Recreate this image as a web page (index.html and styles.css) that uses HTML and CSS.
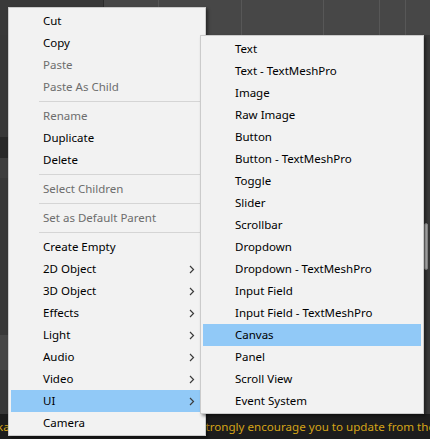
FILE: index.html
```html
<!DOCTYPE html>
<html>
<head>
<meta charset="utf-8">
<link rel="stylesheet" href="styles.css">
</head>
<body>
<div class="screen">
  <div class="topbar">
    <div class="hier-top"></div>
    <div class="scene">
      <div class="cell"></div><div class="cell"></div><div class="cell"></div><div class="cell"></div><div class="cell"></div><div class="cell last"></div>
    </div>
  </div>
  <div class="middle">
    <div class="left-panel">
      <div class="sp1"></div>
      <div class="band-dark"></div>
      <div class="band-tool"></div>
      <div class="sp2"></div>
      <div class="band-sel"></div>
    </div>
    <div class="center"></div>
    <div class="scrolltrack"><div class="thumb"></div></div>
  </div>
  <div class="status">
    <span class="status-left">ka</span><span class="status-right">strongly encourage you to update from the latest version</span>
  </div>

  <div class="menu menu-main">
    <div class="item">Cut</div>
    <div class="item">Copy</div>
    <div class="item disabled">Paste</div>
    <div class="item disabled">Paste As Child</div>
    <div class="sep"></div>
    <div class="item disabled">Rename</div>
    <div class="item">Duplicate</div>
    <div class="item">Delete</div>
    <div class="sep"></div>
    <div class="item disabled">Select Children</div>
    <div class="sep"></div>
    <div class="item disabled">Set as Default Parent</div>
    <div class="sep"></div>
    <div class="item">Create Empty</div>
    <div class="item sub"><span class="label">2D Object</span><svg class="chev" width="6" height="9" viewBox="0 0 6 9"><path d="M1 1 L4.5 4.5 L1 8" fill="none" stroke="#3c3c3c" stroke-width="1.2"/></svg></div>
    <div class="item sub"><span class="label">3D Object</span><svg class="chev" width="6" height="9" viewBox="0 0 6 9"><path d="M1 1 L4.5 4.5 L1 8" fill="none" stroke="#3c3c3c" stroke-width="1.2"/></svg></div>
    <div class="item sub"><span class="label">Effects</span><svg class="chev" width="6" height="9" viewBox="0 0 6 9"><path d="M1 1 L4.5 4.5 L1 8" fill="none" stroke="#3c3c3c" stroke-width="1.2"/></svg></div>
    <div class="item sub"><span class="label">Light</span><svg class="chev" width="6" height="9" viewBox="0 0 6 9"><path d="M1 1 L4.5 4.5 L1 8" fill="none" stroke="#3c3c3c" stroke-width="1.2"/></svg></div>
    <div class="item sub"><span class="label">Audio</span><svg class="chev" width="6" height="9" viewBox="0 0 6 9"><path d="M1 1 L4.5 4.5 L1 8" fill="none" stroke="#3c3c3c" stroke-width="1.2"/></svg></div>
    <div class="item sub"><span class="label">Video</span><svg class="chev" width="6" height="9" viewBox="0 0 6 9"><path d="M1 1 L4.5 4.5 L1 8" fill="none" stroke="#3c3c3c" stroke-width="1.2"/></svg></div>
    <div class="item sub active"><span class="label">UI</span><svg class="chev" width="6" height="9" viewBox="0 0 6 9"><path d="M1 1 L4.5 4.5 L1 8" fill="none" stroke="#3c3c3c" stroke-width="1.2"/></svg></div>
    <div class="item">Camera</div>
  </div>

  <div class="menu menu-sub">
    <div class="item">Text</div>
    <div class="item">Text - TextMeshPro</div>
    <div class="item">Image</div>
    <div class="item">Raw Image</div>
    <div class="item">Button</div>
    <div class="item">Button - TextMeshPro</div>
    <div class="item">Toggle</div>
    <div class="item">Slider</div>
    <div class="item">Scrollbar</div>
    <div class="item">Dropdown</div>
    <div class="item">Dropdown - TextMeshPro</div>
    <div class="item">Input Field</div>
    <div class="item">Input Field - TextMeshPro</div>
    <div class="item active">Canvas</div>
    <div class="item">Panel</div>
    <div class="item">Scroll View</div>
    <div class="item">Event System</div>
  </div>
</div>
</body>
</html>
```

FILE: styles.css
```css
* { box-sizing: border-box; }
html, body { margin: 0; padding: 0; background: #383838; }
.screen {
  position: relative;
  width: 430px;
  height: 439px;
  overflow: hidden;
  display: grid;
  grid-template-rows: 35px 1fr 25px;
  font-family: "Noto Sans", "Open Sans", sans-serif;
}
.topbar { display: flex; }
.hier-top { width: 104px; background: #393939; border-right: 1px solid #2c2c2c; }
.scene {
  flex: 1;
  background: #474747;
  display: grid;
  grid-template-columns: 55px 83px 82px 56px 26px 1fr;
}
.cell { border-right: 1px solid #575757; }
.cell.last { border-right: none; }

.middle { display: flex; background: #383838; }
.left-panel { width: 104px; display: flex; flex-direction: column; }
.sp1 { height: 102px; }
.band-dark { height: 21px; background: #282828; }
.band-tool { height: 20px; background: #3d3d3d; }
.sp2 { height: 157px; }
.band-sel { height: 35px; background: #464646; }
.center { flex: 1; }
.scrolltrack { width: 6px; padding-top: 188px; }
.thumb { width: 4px; height: 47px; margin-left: 0; background: #bdbdbd; border: 1px solid #8a8a8a; border-radius: 2px; }

.status {
  background: #1c1c1c;
  color: #d4a418;
  font-size: 11.6px;
  line-height: 25px;
  white-space: nowrap;
  overflow: hidden;
  display: flex;
}
.status-left { width: 203px; margin-left: -3px; flex: none; }
.status-right { flex: none; }

.menu {
  position: absolute;
  background: #f2f2f2;
  border: 1px solid #cbcbcb;
  padding: 2px 2px 1px 2px;
  box-shadow: 2px 2px 3px rgba(0,0,0,0.45);
  font-size: 11.5px;
  color: #000;
}
.menu-main { left: 8px; top: 7px; width: 198px; z-index: 1; }
.menu-sub { left: 200px; top: 35px; width: 224px; z-index: 2; }
.item {
  height: 22px;
  line-height: 22px;
  padding-left: 32px;
  white-space: nowrap;
}
.item.disabled { color: #6d6d6d; }
.item.active { background: #91c9f7; }
.item.sub { display: flex; align-items: center; }
.item.sub .label { flex: 1; }
.chev { margin-right: 8px; flex: none; }
.sep {
  height: 7px;
  padding-top: 3px;
  margin-left: 28px;
}
.sep::before {
  content: "";
  display: block;
  height: 1px;
  background: #d5d5d5;
}
```
